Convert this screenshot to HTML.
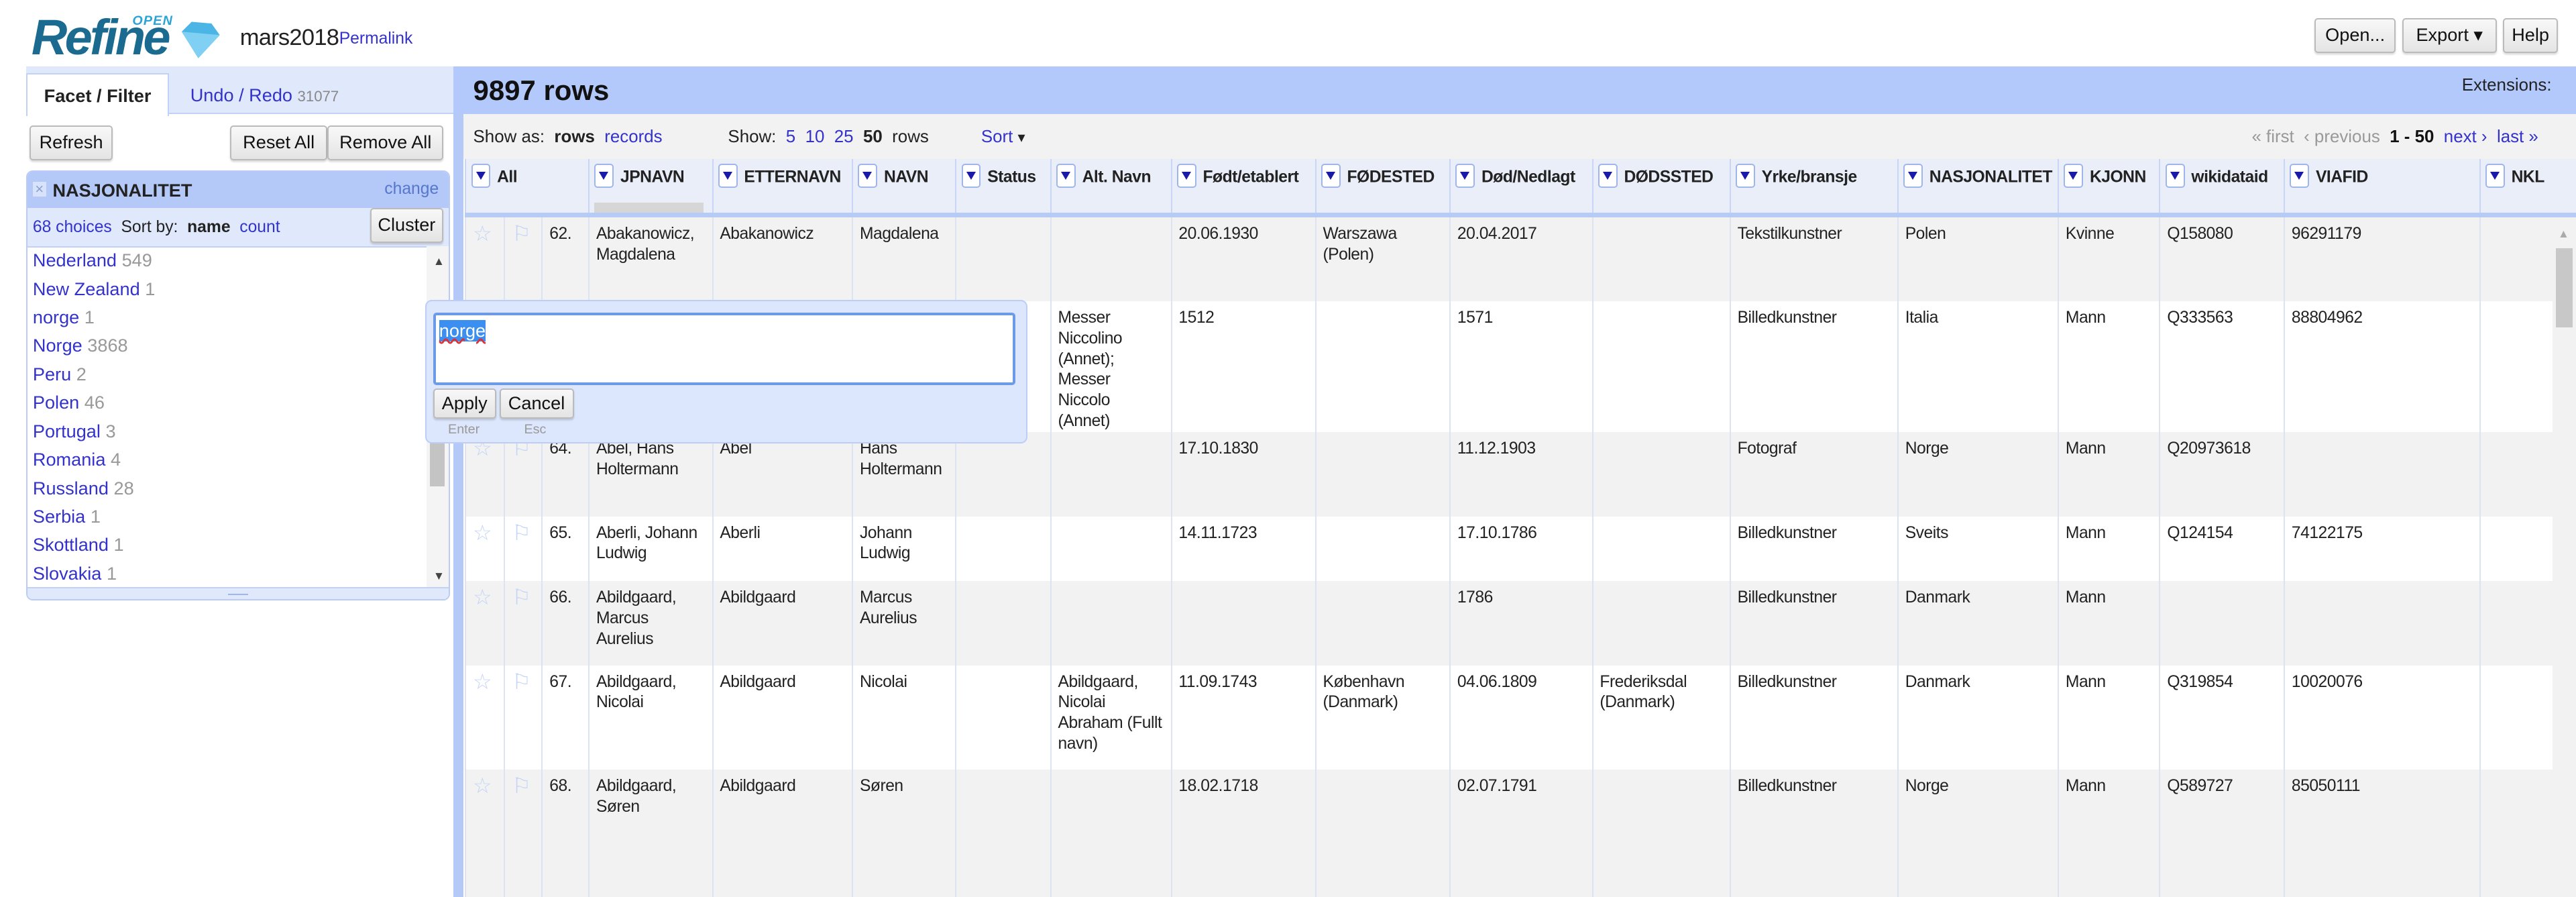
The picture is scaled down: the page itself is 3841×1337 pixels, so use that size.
<!DOCTYPE html>
<html><head><meta charset="utf-8">
<style>
html,body{margin:0;padding:0;width:3841px;height:1337px;overflow:hidden;background:#fff}
#w{zoom:2.4669;width:1557px;height:542px;position:relative;overflow:hidden;font-family:"Liberation Sans",Arial,sans-serif;font-size:11px;color:#222}
.a{position:absolute}
a,.lk{color:#3333cc;text-decoration:none}
.btn{position:absolute;border:1px solid #bbb;border-radius:2px;background:linear-gradient(#f8f8f8,#e4e4e4);font-size:11px;color:#111;text-align:center;box-sizing:border-box;box-shadow:0 1px 1px rgba(0,0,0,.15);white-space:nowrap}
.cnt{color:#999}
table{border-collapse:collapse;table-layout:fixed;position:absolute;left:281px;top:96px}
td{vertical-align:top;padding:4px 4px 0 4px;font-size:10px;line-height:12.5px;letter-spacing:-0.2px;border-left:1px solid #dde3f0;overflow:hidden;color:#222}
tr.g td{background:#f2f2f2}
tr.wt td{background:#fff}
tr.h td{background:#eaeef9;border-left:1px solid #c9d6f7;border-bottom:3px solid #b7cbf7;height:28px;font-weight:bold;white-space:nowrap;padding:4px 3px 0 3px}
.dd{display:inline-block;width:10px;height:13px;border:1px solid #9fb6ec;border-radius:2px;background:#fff;vertical-align:middle;margin-right:4px;position:relative;top:-1px}
.dd:after{content:"";position:absolute;left:2px;top:4px;border-left:3px solid transparent;border-right:3px solid transparent;border-top:5px solid #1a1aa8}
.st{color:#c3d4f5;font-size:13px;line-height:12px}
</style></head><body><div id="w">

<div class="a" style="left:19px;top:5px;font-size:30px;font-style:italic;font-weight:bold;color:#1b6a90;letter-spacing:-1.5px;line-height:36px">Refine</div>
<div class="a" style="left:80px;top:8px;font-size:8px;font-style:italic;font-weight:bold;color:#2aa4d8;letter-spacing:.5px">OPEN</div>
<svg class="a" style="left:108px;top:12px" width="26" height="24" viewBox="0 0 26 24"><polygon points="2,7 8,1 20,2 25,9 12,23" fill="#4bb6e6"/><polygon points="2,7 25,9 12,23" fill="#7fd0f2"/></svg>
<div class="a" style="left:145px;top:15px;font-size:14px;color:#222;letter-spacing:-0.3px">mars2018</div>
<div class="a lk" style="left:205px;top:18px;font-size:10px">Permalink</div>
<div class="btn" style="left:1399px;top:11px;width:49px;height:21px;line-height:19px">Open...</div>
<div class="btn" style="left:1452px;top:11px;width:57px;height:21px;line-height:19px">Export ▾</div>
<div class="btn" style="left:1513px;top:11px;width:33px;height:21px;line-height:19px">Help</div>

<div class="a" style="left:16px;top:40px;width:259px;height:29px;background:#e0e8fc;border-bottom:1px solid #c2d2f6;box-sizing:border-box"></div>
<div class="a" style="left:16px;top:44px;width:86px;height:26px;background:#fff;border:1px solid #c2d2f6;border-bottom:none;box-sizing:border-box;font-weight:bold;font-size:11px;line-height:26px;text-align:center">Facet / Filter</div>
<div class="a lk" style="left:115px;top:51px;font-size:11px">Undo / Redo <span style="font-size:9px;color:#888">31077</span></div>
<div class="btn" style="left:18px;top:76px;width:50px;height:21px;line-height:19px">Refresh</div>
<div class="btn" style="left:139px;top:76px;width:59px;height:21px;line-height:19px">Reset All</div>
<div class="btn" style="left:198px;top:76px;width:70px;height:21px;line-height:19px">Remove All</div>

<div class="a" style="left:16px;top:103px;width:256px;height:260px;background:#fff;border:1px solid #b9cbf6;border-radius:4px;box-sizing:border-box;overflow:hidden">
 <div class="a" style="left:0;top:0;width:256px;height:22px;background:#b5c9f9"></div>
 <div class="a" style="left:3px;top:6px;width:8px;height:9px;background:#d8e2fb;color:#8aa0d0;font-size:9px;line-height:9px;text-align:center">×</div>
 <div class="a" style="left:15px;top:5px;font-weight:bold;font-size:11px">NASJONALITET</div>
 <div class="a lk" style="right:6px;top:5px;font-size:10px;color:#5577cc">change</div>
 <div class="a" style="left:0;top:22px;width:256px;height:23px;background:#e0e8fc;border-bottom:1px solid #c2d2f6"></div>
 <div class="a" style="left:3px;top:28px;font-size:10px"><span class="lk">68 choices</span> &nbsp;Sort by: &nbsp;<b>name</b> &nbsp;<span class="lk">count</span></div>
 <div class="btn" style="left:207px;top:22px;width:44px;height:21px;line-height:19px">Cluster</div>
 <div class="a" style="left:3px;top:45px;font-size:11px;line-height:17.2px">
  <div><span class="lk">Nederland</span> <span class="cnt">549</span></div>
  <div><span class="lk">New Zealand</span> <span class="cnt">1</span></div>
  <div><span class="lk">norge</span> <span class="cnt">1</span></div>
  <div><span class="lk">Norge</span> <span class="cnt">3868</span></div>
  <div><span class="lk">Peru</span> <span class="cnt">2</span></div>
  <div><span class="lk">Polen</span> <span class="cnt">46</span></div>
  <div><span class="lk">Portugal</span> <span class="cnt">3</span></div>
  <div><span class="lk">Romania</span> <span class="cnt">4</span></div>
  <div><span class="lk">Russland</span> <span class="cnt">28</span></div>
  <div><span class="lk">Serbia</span> <span class="cnt">1</span></div>
  <div><span class="lk">Skottland</span> <span class="cnt">1</span></div>
  <div><span class="lk">Slovakia</span> <span class="cnt">1</span></div>
 </div>
 <div class="a" style="left:241px;top:45px;width:14px;height:207px;background:#f4f4f4"></div>
 <div class="a" style="left:245px;top:50px;font-size:7px;color:#444">▲</div>
 <div class="a" style="left:245px;top:240px;font-size:7px;color:#444">▼</div>
 <div class="a" style="left:243px;top:145px;width:9px;height:45px;background:#c4c4c4"></div>
 <div class="a" style="left:0;top:251px;width:256px;height:9px;background:#e0e8fc;border-top:1px solid #c2d2f6"></div>
 <div class="a" style="left:121px;top:255px;width:12px;height:3px;border-top:1px solid #9fb6ec;border-bottom:1px solid #9fb6ec"></div>
</div>

<div class="a" style="left:274px;top:40px;width:6px;height:502px;background:#b5c9f9"></div>
<div class="a" style="left:274px;top:40px;width:1283px;height:29px;background:#b3c8fb"></div>
<div class="a" style="left:286px;top:45px;font-size:17px;font-weight:bold;color:#111">9897 rows</div>
<div class="a" style="left:1488px;top:46px;font-size:10.5px;color:#222">Extensions:</div>
<div class="a" style="left:280px;top:69px;width:1277px;height:27px;background:#f2f2f2"></div>
<div class="a" style="left:286px;top:77px;font-size:10.5px">Show as: &nbsp;<b>rows</b> &nbsp;<span class="lk">records</span></div>
<div class="a" style="left:440px;top:77px;font-size:10.5px">Show: &nbsp;<span class="lk">5</span> &nbsp;<span class="lk">10</span> &nbsp;<span class="lk">25</span> &nbsp;<b>50</b> &nbsp;rows</div>
<div class="a lk" style="left:593px;top:77px;font-size:10.5px">Sort <span style="color:#222;font-size:9px">▾</span></div>
<div class="a" style="left:1361px;top:77px;font-size:10.5px;color:#999">« first &nbsp;‹ previous &nbsp;<b style="color:#111">1 - 50</b> &nbsp;<span class="lk">next ›</span> &nbsp;<span class="lk">last »</span></div>

<table>
<colgroup><col style="width:24px"><col style="width:23px"><col style="width:29px"><col style="width:75px"><col style="width:85px"><col style="width:63px"><col style="width:58px"><col style="width:74px"><col style="width:88px"><col style="width:82px"><col style="width:87px"><col style="width:84px"><col style="width:104px"><col style="width:97px"><col style="width:62px"><col style="width:76px"><col style="width:126px"><col style="width:60px"></colgroup>
<tr class="h"><td colspan="3"><span class="dd"></span>All</td><td><span class="dd"></span>JPNAVN<div style="margin-top:8px;width:66px;height:6px;background:#d6d6d6"></div></td><td><span class="dd"></span>ETTERNAVN</td><td><span class="dd"></span>NAVN</td><td><span class="dd"></span>Status</td><td><span class="dd"></span>Alt. Navn</td><td><span class="dd"></span>Født/etablert</td><td><span class="dd"></span>FØDESTED</td><td><span class="dd"></span>Død/Nedlagt</td><td><span class="dd"></span>DØDSSTED</td><td><span class="dd"></span>Yrke/bransje</td><td><span class="dd"></span>NASJONALITET</td><td><span class="dd"></span>KJONN</td><td><span class="dd"></span>wikidataid</td><td><span class="dd"></span>VIAFID</td><td><span class="dd"></span>NKL</td></tr>
<tr class="g" style="height:52px"><td class="st">☆</td><td class="st">⚐</td><td>62.</td><td>Abakanowicz, Magdalena</td><td>Abakanowicz</td><td>Magdalena</td><td></td><td></td><td>20.06.1930</td><td>Warszawa (Polen)</td><td>20.04.2017</td><td></td><td>Tekstilkunstner</td><td>Polen</td><td>Kvinne</td><td>Q158080</td><td>96291179</td><td></td></tr>
<tr class="wt" style="height:77px"><td class="st">☆</td><td class="st">⚐</td><td>63.</td><td>Abate, Niccolò</td><td>Abate</td><td>Niccolò</td><td></td><td>Messer Niccolino (Annet); Messer Niccolo (Annet)</td><td>1512</td><td></td><td>1571</td><td></td><td>Billedkunstner</td><td>Italia</td><td>Mann</td><td>Q333563</td><td>88804962</td><td></td></tr>
<tr class="g" style="height:51px"><td class="st">☆</td><td class="st">⚐</td><td>64.</td><td>Abel, Hans Holtermann</td><td>Abel</td><td>Hans Holtermann</td><td></td><td></td><td>17.10.1830</td><td></td><td>11.12.1903</td><td></td><td>Fotograf</td><td>Norge</td><td>Mann</td><td>Q20973618</td><td></td><td></td></tr>
<tr class="wt" style="height:39px"><td class="st">☆</td><td class="st">⚐</td><td>65.</td><td>Aberli, Johann Ludwig</td><td>Aberli</td><td>Johann Ludwig</td><td></td><td></td><td>14.11.1723</td><td></td><td>17.10.1786</td><td></td><td>Billedkunstner</td><td>Sveits</td><td>Mann</td><td>Q124154</td><td>74122175</td><td></td></tr>
<tr class="g" style="height:51px"><td class="st">☆</td><td class="st">⚐</td><td>66.</td><td>Abildgaard, Marcus Aurelius</td><td>Abildgaard</td><td>Marcus Aurelius</td><td></td><td></td><td></td><td></td><td>1786</td><td></td><td>Billedkunstner</td><td>Danmark</td><td>Mann</td><td></td><td></td><td></td></tr>
<tr class="wt" style="height:63px"><td class="st">☆</td><td class="st">⚐</td><td>67.</td><td>Abildgaard, Nicolai</td><td>Abildgaard</td><td>Nicolai</td><td></td><td>Abildgaard, Nicolai Abraham (Fullt navn)</td><td>11.09.1743</td><td>København (Danmark)</td><td>04.06.1809</td><td>Frederiksdal (Danmark)</td><td>Billedkunstner</td><td>Danmark</td><td>Mann</td><td>Q319854</td><td>10020076</td><td></td></tr>
<tr class="g" style="height:80px"><td class="st">☆</td><td class="st">⚐</td><td>68.</td><td>Abildgaard, Søren</td><td>Abildgaard</td><td>Søren</td><td></td><td></td><td>18.02.1718</td><td></td><td>02.07.1791</td><td></td><td>Billedkunstner</td><td>Norge</td><td>Mann</td><td>Q589727</td><td>85050111</td><td></td></tr>
</table>
<div class="a" style="left:1543px;top:133px;width:14px;height:409px;background:#f2f2f2"></div>
<div class="a" style="left:1546px;top:137px;font-size:7px;color:#aaa">▲</div>
<div class="a" style="left:1545px;top:150px;width:10px;height:48px;background:#c8c8c8"></div>

<div class="a" style="left:257px;top:181px;width:364px;height:87px;background:#dce6fc;border:1px solid #bccdf6;border-radius:4px;box-sizing:border-box">
 <div class="a" style="left:4px;top:7px;width:352px;height:44px;background:#fff;border:2px solid #6d9ae6;border-radius:2px;box-sizing:border-box">
  <span class="a" style="left:2px;top:3px;background:#3b8ff0;color:#fff;font-size:11px;line-height:13px;text-decoration:underline wavy #e03030">norge</span>
 </div>
 <div class="btn" style="left:4px;top:53px;width:38px;height:18px;line-height:16px">Apply</div>
 <div class="btn" style="left:44px;top:53px;width:45px;height:18px;line-height:16px">Cancel</div>
 <div class="a" style="left:13px;top:73px;font-size:8px;color:#999">Enter</div>
 <div class="a" style="left:59px;top:73px;font-size:8px;color:#999">Esc</div>
</div>

</div></body></html>
